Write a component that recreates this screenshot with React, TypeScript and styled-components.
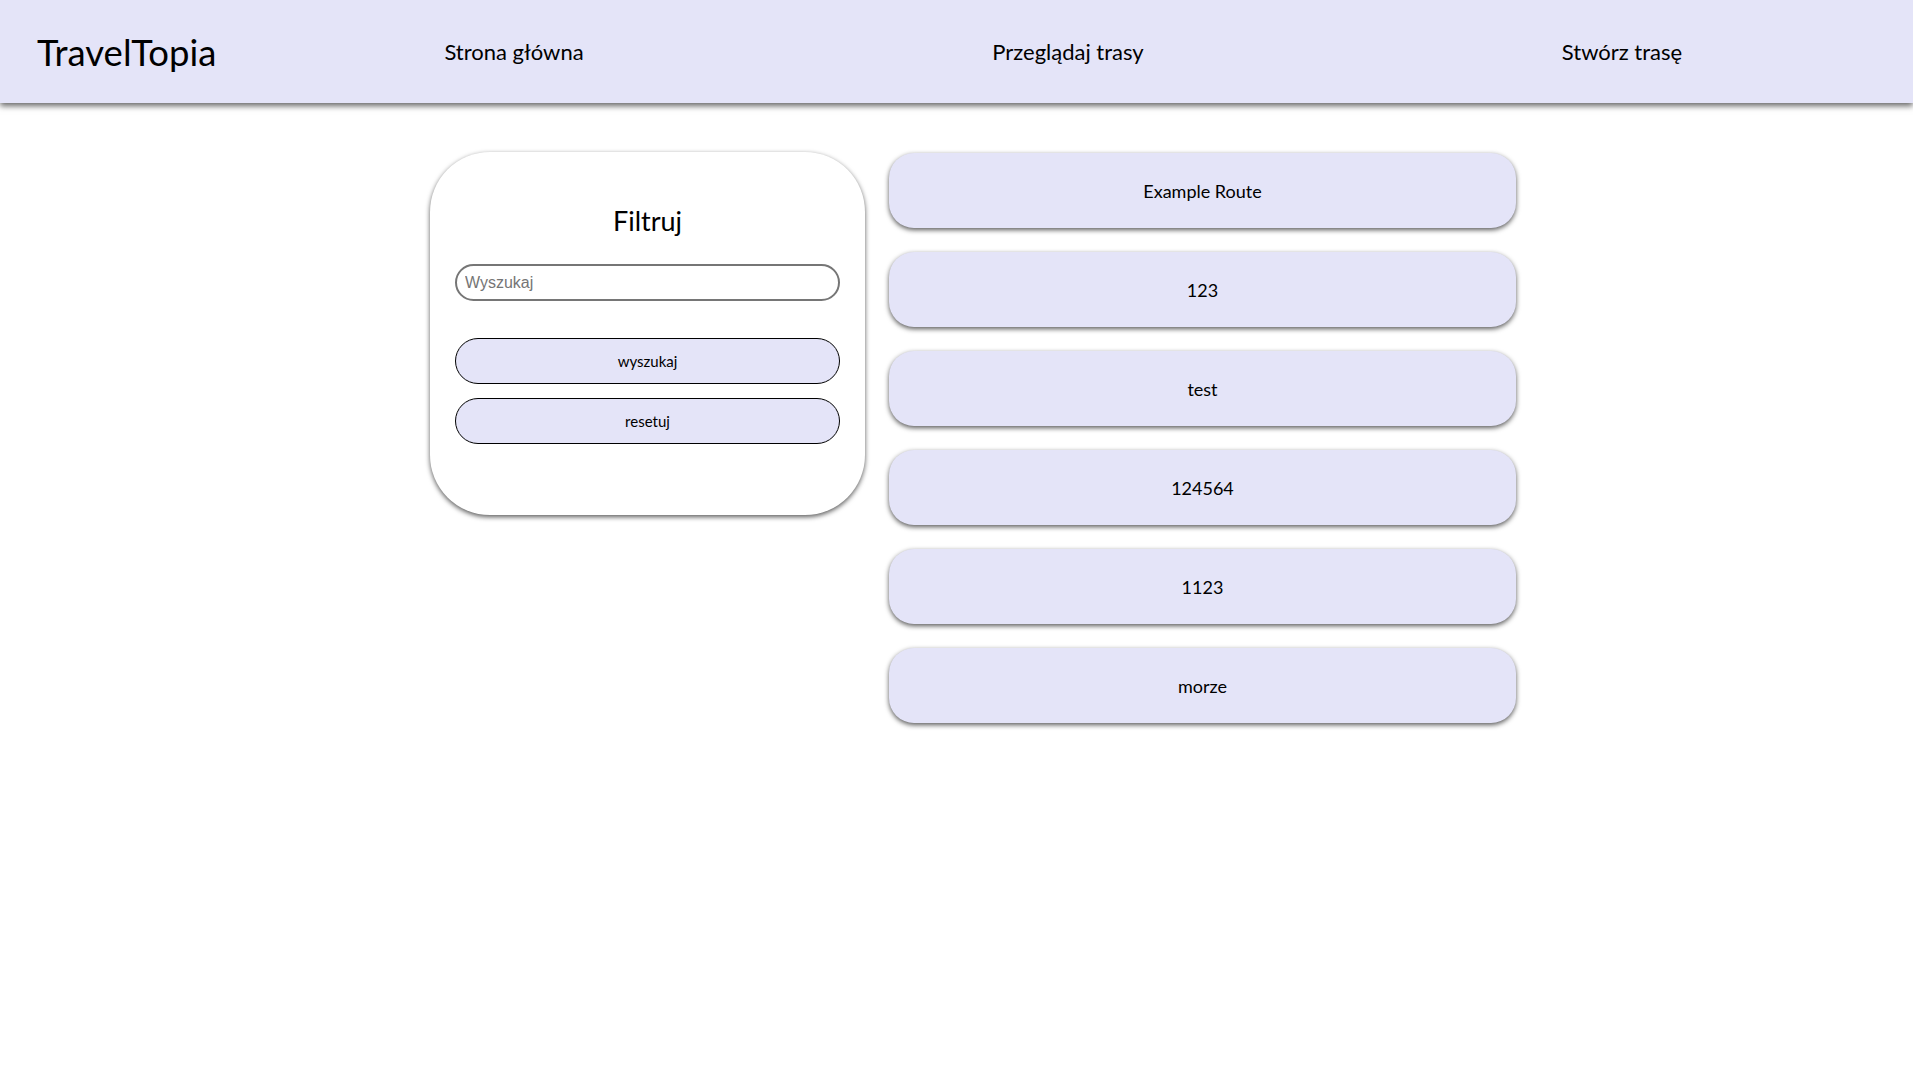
import React from "react";
import styled, { createGlobalStyle } from "styled-components";

const routes = ["Example Route", "123", "test", "124564", "1123", "morze"];

const GlobalStyle = createGlobalStyle`
    body {
        margin: 0;
        background: #ffffff;
        font-family: Lato, "Open Sans", sans-serif;
        color: #000000;
    }
`;

const App = () => {
    return (
        <>
            <GlobalStyle />
            <StyledHeader>
                <StyledLogo>TravelTopia</StyledLogo>
                <StyledNavLink href="#">Strona główna</StyledNavLink>
                <StyledNavLink href="#">Przeglądaj trasy</StyledNavLink>
                <StyledNavLink href="#">Stwórz trasę</StyledNavLink>
            </StyledHeader>

            <StyledMain>
                <StyledFilter>
                    <StyledTitle>Filtruj</StyledTitle>
                    <StyledInput type="text" placeholder="Wyszukaj" />
                    <StyledButtons>
                        <StyledButton>wyszukaj</StyledButton>
                        <StyledButton>resetuj</StyledButton>
                    </StyledButtons>
                </StyledFilter>

                <StyledRoutes>
                    {routes.map((route) => (
                        <StyledRoute key={route}>{route}</StyledRoute>
                    ))}
                </StyledRoutes>
            </StyledMain>
        </>
    );
};

const StyledHeader = styled.header`
    display: grid;
    grid-template-columns: 237px repeat(3, 1fr);
    align-items: center;
    height: 103px;
    padding-right: 14px;
    background-color: #e4e4f8;
    box-shadow: 0 3px 6px rgba(0, 0, 0, 0.6);
`;

const StyledLogo = styled.h1`
    margin: 0 0 0 37px;
    font-size: 36.5px;
    font-weight: 400;
    white-space: nowrap;
`;

const StyledNavLink = styled.a`
    justify-self: center;
    color: #000000;
    text-decoration: none;
    font-size: 22px;
`;

const StyledMain = styled.main`
    display: flex;
    justify-content: center;
    align-items: flex-start;
    gap: 24px;
    padding: 49px 0 40px 33px;
`;

const StyledFilter = styled.section`
    display: flex;
    flex-direction: column;
    width: 435px;
    box-sizing: border-box;
    padding: 0 25px 71px;
    border-radius: 60px;
    background-color: #ffffff;
    box-shadow: 0 2px 5px rgba(0, 0, 0, 0.65);
`;

const StyledTitle = styled.h2`
    margin: 52px 0 26px;
    text-align: center;
    font-size: 27px;
    font-weight: 400;
    line-height: 34px;
`;

const StyledInput = styled.input`
    height: 37px;
    box-sizing: border-box;
    padding: 0 8px;
    border: 2px solid #767676;
    border-radius: 19px;
    font-family: "Liberation Sans", Arial, sans-serif;
    font-size: 16px;
    outline: none;

    &::placeholder {
        color: #757575;
    }
`;

const StyledButtons = styled.div`
    display: flex;
    flex-direction: column;
    gap: 14px;
    margin-top: 37px;
`;

const StyledButton = styled.button`
    height: 46px;
    border: 1px solid #000000;
    border-radius: 23px;
    background-color: #e4e4f8;
    font-family: Lato, "Open Sans", sans-serif;
    font-size: 15px;
    color: #000000;
    cursor: pointer;
`;

const StyledRoutes = styled.div`
    display: flex;
    flex-direction: column;
    gap: 24px;
    width: 627px;
    padding-top: 1px;
`;

const StyledRoute = styled.div`
    display: flex;
    justify-content: center;
    align-items: center;
    height: 75px;
    border-radius: 25px;
    background-color: #e4e4f8;
    box-shadow: 0 2px 5px rgba(0, 0, 0, 0.65);
    font-size: 18px;
`;

export default App;
